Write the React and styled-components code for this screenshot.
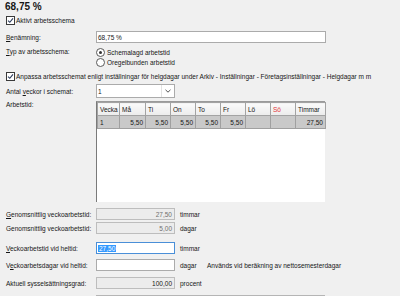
import React from 'react'
import styled, { createGlobalStyle } from 'styled-components'

const Global = createGlobalStyle`
  html, body { margin: 0; background: #f0f0f0; }
`

const Page = styled.div`
  width: 400px;
  height: 296px;
  overflow: hidden;
  box-sizing: border-box;
  padding-left: 5px;
  background: #f0f0f0;
  font-family: "Liberation Sans", Arial, sans-serif;
  font-size: 6.5px;
  color: #161616;
`

const Title = styled.h1`
  margin: 0;
  font-size: 10px;
  font-weight: bold;
  line-height: 13px;
`

const Row = styled.div`
  display: grid;
  grid-template-columns: ${p => p.$cols || '91px 1fr'};
  align-items: ${p => p.$align || 'center'};
  margin-top: ${p => p.$mt || 0}px;
  height: ${p => p.$h || 12}px;
`

const Label = styled.span`
  padding-left: 1px;
  white-space: nowrap;
  u { text-decoration: underline; }
`

const Check = styled.label`
  display: flex;
  align-items: center;
  gap: 1px;
  padding-left: 1px;
  margin-top: ${p => p.$mt || 0}px;
  height: 12px;
  white-space: nowrap;
`

const Box = styled.span`
  width: 7px;
  height: 7px;
  border: 1px solid #3a3a3a;
  background: #fff;
  display: inline-flex;
  align-items: center;
  justify-content: center;
`

const Radio = styled.span`
  width: 7px;
  height: 7px;
  border: 1px solid #5a5a5a;
  border-radius: 50%;
  background: #fff;
  display: inline-flex;
  align-items: center;
  justify-content: center;
  &::after {
    content: "";
    width: 3px;
    height: 3px;
    border-radius: 50%;
    background: ${p => (p.$on ? '#333' : 'transparent')};
  }
`

const RadioLine = styled.div`
  display: flex;
  align-items: center;
  gap: 2px;
  height: 10px;
`

const Input = styled.div`
  box-sizing: border-box;
  height: ${p => p.$h || 12}px;
  width: ${p => p.$w || 79}px;
  border: 1px solid ${p => (p.$focus ? '#4a8fd8' : p.$ro ? '#bdbdbd' : '#ababab')};
  background: ${p => (p.$ro ? '#ececec' : '#fff')};
  color: ${p => (p.$dim ? '#707070' : '#161616')};
  display: flex;
  align-items: center;
  justify-content: ${p => (p.$right ? 'flex-end' : 'flex-start')};
  padding: 0 2px 0 1px;
`

const Sel = styled.mark`
  background: #3399ff;
  color: #fff;
  padding: 0 1px;
`

const Select = styled(Input)`
  justify-content: space-between;
  padding-right: 0;
`

const Arrow = styled.span`
  width: 12px;
  height: 100%;
  border-left: 1px solid #e2e2e2;
  display: flex;
  align-items: center;
  justify-content: center;
`

const Unit = styled.span`
  padding-left: 5px;
  white-space: nowrap;
`

const Grid = styled.div`
  box-sizing: border-box;
  width: 229px;
  height: 101px;
  background: #fff;
  border-left: 1px solid #7a7a7a;
  border-top: 1px solid #9a9a9a;
`

const Table = styled.table`
  border-collapse: collapse;
  table-layout: fixed;
  width: 228px;
`

const Th = styled.th`
  height: 12px;
  padding: 0 2px;
  font-weight: normal;
  text-align: left;
  background: linear-gradient(#fafafa, #ececec);
  border: 1px solid #a3a3a3;
  color: ${p => (p.$red ? '#e2383c' : '#161616')};
`

const Td = styled.td`
  height: 12px;
  padding: 0 2px;
  text-align: ${p => (p.$left ? 'left' : 'right')};
  background: #c9c9c9;
  border: 1px solid #a0a0a0;
`

const BottomLine = styled.div`
  margin: 6px 0 0 91px;
  width: 229px;
  border-top: 1px solid #b5b5b5;
`

const cols = [22, 26, 25, 25, 25, 25, 25, 25, 30]
const heads = ['Vecka', 'Må', 'Ti', 'On', 'To', 'Fr', 'Lö', 'Sö', 'Timmar']
const week = ['1', '5,50', '5,50', '5,50', '5,50', '5,50', '', '', '27,50']

const CheckMark = () => (
  <svg width="7" height="7" viewBox="0 0 7 7">
    <path d="M1 3.6 L2.8 5.3 L6 1.4" fill="none" stroke="#2a3a5a" strokeWidth="1.1" />
  </svg>
)

export default function App() {
  const numCols = '91px 79px 32px auto'
  return (
    <Page>
      <Global />
      <Title>68,75 %</Title>
      <Check $mt={1}><Box><CheckMark /></Box>Aktivt arbetsschema</Check>

      <Row $mt={5}>
        <Label><u>B</u>enämning:</Label>
        <Input $w={230}>68,75 %</Input>
      </Row>

      <Row $mt={4} $h={20} $align="start" style={{ marginBottom: 3 }}>
        <Label style={{ lineHeight: '10px' }}><u>T</u>yp av arbetsschema:</Label>
        <div>
          <RadioLine><Radio $on />Schemalagd arbetstid</RadioLine>
          <RadioLine><Radio />Oregelbunden arbetstid</RadioLine>
        </div>
      </Row>

      <Check><Box><CheckMark /></Box>Anpassa arbetsschemat enligt inställningar för helgdagar under Arkiv - Inställningar - Företagsinställningar - Helgdagar m m</Check>

      <Row $mt={2} $h={14}>
        <Label>Antal <u>v</u>eckor i schemat:</Label>
        <Select $h={14}>
          1
          <Arrow>
            <svg width="6" height="4" viewBox="0 0 6 4">
              <path d="M0.5 0.8 L3 3.2 L5.5 0.8" fill="none" stroke="#555" strokeWidth="1" />
            </svg>
          </Arrow>
        </Select>
      </Row>

      <Row $mt={3} $h={101} $align="start">
        <Label style={{ lineHeight: '8px' }}>Arbetstid:</Label>
        <Grid>
          <Table>
            <colgroup>
              {cols.map((w, i) => <col key={i} style={{ width: w }} />)}
            </colgroup>
            <thead>
              <tr>{heads.map(h => <Th key={h} $red={h === 'Sö'}>{h}</Th>)}</tr>
            </thead>
            <tbody>
              <tr>{week.map((v, i) => <Td key={i} $left={i === 0}>{v}</Td>)}</tr>
            </tbody>
          </Table>
        </Grid>
      </Row>

      <Row $mt={6} $cols={numCols}>
        <Label><u>G</u>enomsnittlig veckoarbetstid:</Label>
        <Input $ro $dim $right>27,50</Input>
        <Unit>timmar</Unit>
      </Row>
      <Row $mt={2} $cols={numCols}>
        <Label>Genomsnittlig veckoarbetstid:</Label>
        <Input $ro $dim $right>5,00</Input>
        <Unit>dagar</Unit>
      </Row>
      <Row $mt={8} $cols={numCols}>
        <Label><u>V</u>eckoarbetstid vid heltid:</Label>
        <Input $focus><Sel>27,50</Sel></Input>
        <Unit>timmar</Unit>
      </Row>
      <Row $mt={5} $cols={numCols}>
        <Label>V<u>e</u>ckoarbetsdagar vid heltid:</Label>
        <Input />
        <Unit>dagar</Unit>
        <span>Används vid beräkning av nettosemesterdagar</span>
      </Row>
      <Row $mt={6} $cols={numCols}>
        <Label>Aktuell sysselsättningsgrad:</Label>
        <Input $ro $right>100,00</Input>
        <Unit>procent</Unit>
      </Row>
      <BottomLine />
    </Page>
  )
}
